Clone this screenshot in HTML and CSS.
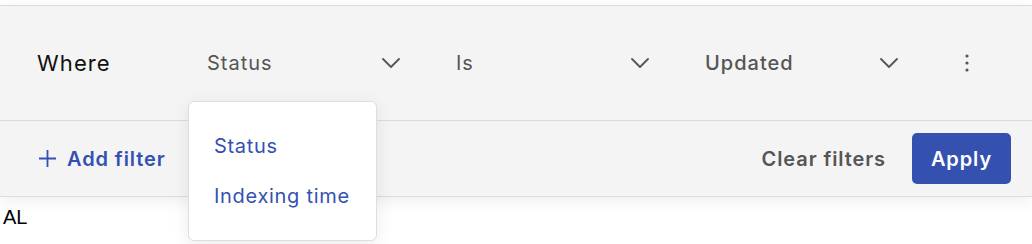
FILE: index.html
```html
<!DOCTYPE html>
<html>
<head>
<meta charset="utf-8">
<link rel="stylesheet" href="styles.css">
</head>
<body>
<div class="panel">
  <div class="row row-top">
    <span class="where">Where</span>
    <div class="select select-status">
      <span class="value">Status</span>
      <svg class="chev" width="18" height="10" viewBox="0 0 18 10"><path d="M1 1 L9 9 L17 1" fill="none" stroke="#555" stroke-width="1.8" stroke-linecap="round" stroke-linejoin="round"/></svg>
      <div class="menu">
        <div class="menu-item">Status</div>
        <div class="menu-item">Indexing time</div>
      </div>
    </div>
    <div class="select">
      <span class="value">Is</span>
      <svg class="chev" width="18" height="10" viewBox="0 0 18 10"><path d="M1 1 L9 9 L17 1" fill="none" stroke="#555" stroke-width="1.8" stroke-linecap="round" stroke-linejoin="round"/></svg>
    </div>
    <div class="select">
      <span class="value value-strong">Updated</span>
      <svg class="chev" width="18" height="10" viewBox="0 0 18 10"><path d="M1 1 L9 9 L17 1" fill="none" stroke="#555" stroke-width="1.8" stroke-linecap="round" stroke-linejoin="round"/></svg>
    </div>
    <button class="kebab" aria-label="More">
      <svg width="4" height="18" viewBox="0 0 4 18"><circle cx="2" cy="2" r="1.6" fill="#555"/><circle cx="2" cy="9" r="1.6" fill="#555"/><circle cx="2" cy="16" r="1.6" fill="#555"/></svg>
    </button>
  </div>
  <div class="row row-bottom">
    <button class="add">
      <svg width="19" height="19" viewBox="0 0 19 19"><path d="M9.5 1 V18 M1 9.5 H18" fill="none" stroke="#3451b2" stroke-width="1.8"/></svg>
      <span>Add filter</span>
    </button>
    <div class="actions">
      <button class="clear">Clear filters</button>
      <button class="apply">Apply</button>
    </div>
  </div>
</div>
<div class="al">AL</div>
</body>
</html>
```
FILE: styles.css
```css
* { box-sizing: border-box; }
html, body { min-height: 100vh; }
body {
  margin: 0;
  background: #fff;
  font-family: Inter, "Noto Sans", sans-serif;
}
.panel {
  margin-top: 5px;
  background: #f4f4f4;
  border-top: 1px solid #dcdcdc;
  border-bottom: 1px solid #dcdcdc;
  box-shadow: 0 4px 16px rgba(0, 0, 0, 0.07);
}
.row {
  display: flex;
  align-items: center;
}
.row-top {
  height: 115px;
  padding-left: 37px;
  border-bottom: 1px solid #dcdcdc;
}
.where {
  width: 158px;
  font-size: 22px;
  letter-spacing: 0.05em;
  color: #111;
}
.select {
  position: relative;
  width: 217px;
  margin-right: 32px;
  padding: 0 12px;
  display: flex;
  align-items: center;
  justify-content: space-between;
  font-size: 20px;
  letter-spacing: 0.05em;
  color: #555;
}
.value-strong { font-weight: 500; }
.chev { display: block; }
.kebab {
  margin-left: 15px;
  border: 0;
  background: none;
  padding: 0;
  width: 20px;
  display: flex;
  justify-content: center;
}
.kebab svg { display: block; }
.menu {
  position: absolute;
  left: -7px;
  top: 50px;
  width: 189px;
  height: 140px;
  background: #fff;
  border: 1px solid #dedede;
  border-radius: 6px;
  box-shadow: 0 4px 18px rgba(0, 0, 0, 0.08);
  padding: 32px 0 0 25px;
  display: flex;
  flex-direction: column;
  gap: 26px;
  z-index: 2;
}
.menu-item {
  font-size: 20px;
  letter-spacing: 0.035em;
  color: #3451b2;
  line-height: 24px;
}
.row-bottom {
  height: 75px;
  padding: 0 21px 0 38px;
  justify-content: space-between;
}
button { font-family: inherit; cursor: pointer; }
.add {
  display: flex;
  align-items: center;
  gap: 10px;
  border: 0;
  background: none;
  padding: 0;
  font-size: 20px;
  font-weight: 600;
  letter-spacing: 0.045em;
  color: #3451b2;
}
.add svg { display: block; }
.actions {
  display: flex;
  align-items: center;
  gap: 26px;
}
.clear {
  border: 0;
  background: none;
  padding: 0;
  font-size: 20px;
  font-weight: 600;
  letter-spacing: 0.045em;
  color: #555;
}
.apply {
  width: 99px;
  height: 51px;
  border: 0;
  border-radius: 5px;
  background: #3451b0;
  color: #fff;
  font-size: 20px;
  font-weight: 600;
  letter-spacing: 0.045em;
}
.al {
  margin-top: 9px;
  padding-left: 3px;
  font-family: "Liberation Sans", Arial, sans-serif;
  font-size: 20px;
  color: #000;
}
```
